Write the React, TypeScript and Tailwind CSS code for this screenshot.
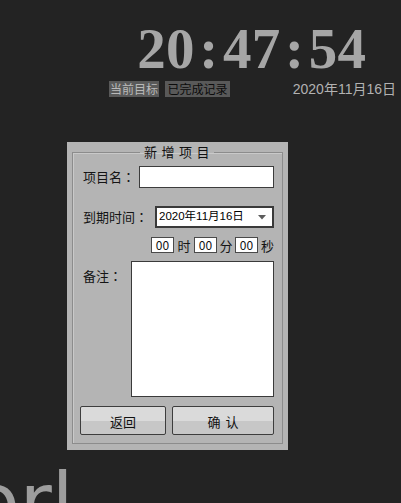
import React from 'react';

const clock = '20:47:54';

function TimeBox({ value }: { value: string }) {
  return (
    <div className="flex h-[16px] w-[23px] items-center justify-center border border-[#4a4a4a] bg-white text-[12px] leading-none text-[#111]">
      {value}
    </div>
  );
}

// full-width colon, centred in its cell like the reference
function Colon() {
  return <span className="font-['Noto_Sans_CJK_TC',sans-serif]">：</span>;
}

export default function App() {
  return (
    <div className="h-screen overflow-hidden bg-[#232323] font-['Noto_Sans_CJK_SC',sans-serif]">
      {/* clock */}
      <div className="flex justify-end pr-[35px] pt-[20px]">
        <div className="flex font-['Liberation_Serif',serif] text-[57px] font-bold leading-[57px] text-[#a6a6a6]">
          {clock.split('').map((c, i) => (
            <span key={i} className="inline-block w-[28.6px] text-center">
              {c}
            </span>
          ))}
        </div>
      </div>

      {/* tabs + date */}
      <div className="mt-[4px] flex items-center justify-between pl-[109px] pr-[5px]">
        <div className="flex gap-[6px] text-[12px] leading-[16px]">
          <div className="w-[50px] bg-[#595959] text-center text-[#b9b9b9]">当前目标</div>
          <div className="w-[65px] bg-[#595959] text-center text-[#0c0c0c]">已完成记录</div>
        </div>
        <div className="font-['Liberation_Sans','Noto_Sans_CJK_SC',sans-serif] text-[14px] leading-[16px] text-[#b2b2b2]">
          2020年11月16日
        </div>
      </div>

      {/* dialog */}
      <div className="ml-[67px] mt-[45px] w-[221px] bg-[#b4b4b4] px-[5px] pb-[6px] pt-[2px]">
        <fieldset className="border border-[#8c8c8c] pb-[8px] pl-[7px] pr-[8px] shadow-[inset_1px_1px_0_#c9c9c9]">
          <legend className="mx-auto pl-[4px] text-[13px] leading-[16px] tracking-[4.5px] text-[#111]">
            新增项目
          </legend>

          <div className="mt-[6px] flex items-center text-[13px] text-[#151515]">
            <span className="ml-[3px]">
              项目名
              <Colon />
            </span>
            <div className="ml-auto h-[22px] w-[135px] border border-[#3c3c3c] bg-white" />
          </div>

          <div className="mt-[18px] flex items-center text-[13px] text-[#151515]">
            <span className="ml-[3px]">
              到期时间
              <Colon />
            </span>
            <div className="ml-auto flex h-[22px] w-[119px] items-center border-2 border-[#3a3a3a] bg-white pl-[2px] pr-[6px]">
              <span className="font-['Liberation_Sans','Noto_Sans_CJK_SC',sans-serif] text-[11.5px] leading-none text-black">
                2020年11月16日
              </span>
              <svg className="ml-auto" width="8" height="5" viewBox="0 0 8 5">
                <polygon points="0,0 8,0 4,4.5" fill="#5c5c5c" />
              </svg>
            </div>
          </div>

          <div className="mt-[9px] flex items-center justify-end text-[13px] leading-none text-[#151515]">
            <TimeBox value="00" />
            <span className="w-[20px] text-center">时</span>
            <TimeBox value="00" />
            <span className="w-[18px] text-center">分</span>
            <TimeBox value="00" />
            <span className="w-[16px] text-right">秒</span>
          </div>

          <div className="mt-[8px] flex items-start text-[13px] text-[#151515]">
            <span className="ml-[3px] mt-[5px]">
              备注
              <Colon />
            </span>
            <div className="ml-auto h-[136px] w-[143px] border border-[#3a3a3a] bg-white" />
          </div>

          <div className="mt-[9px] flex gap-[6px] text-[13px] text-[#111]">
            <button className="h-[29px] w-[86px] rounded-[2px] border border-[#3d3d3d] bg-[linear-gradient(to_bottom,#dadada_52%,#c7c7c7_52%)] pt-[2px]">
              返回
            </button>
            <button className="h-[29px] w-[102px] rounded-[2px] border border-[#3d3d3d] bg-[linear-gradient(to_bottom,#dadada_52%,#c7c7c7_52%)] pl-[5px] pt-[2px] tracking-[5px]">
              确认
            </button>
          </div>
        </fieldset>
      </div>

      {/* large background text, cut off at the edge as in the reference */}
      <div className="-ml-[28px] mt-[13px] whitespace-nowrap font-['DejaVu_Sans',sans-serif] text-[78px] leading-[78px] text-[#9d9d9d]">
        orl
      </div>
    </div>
  );
}
